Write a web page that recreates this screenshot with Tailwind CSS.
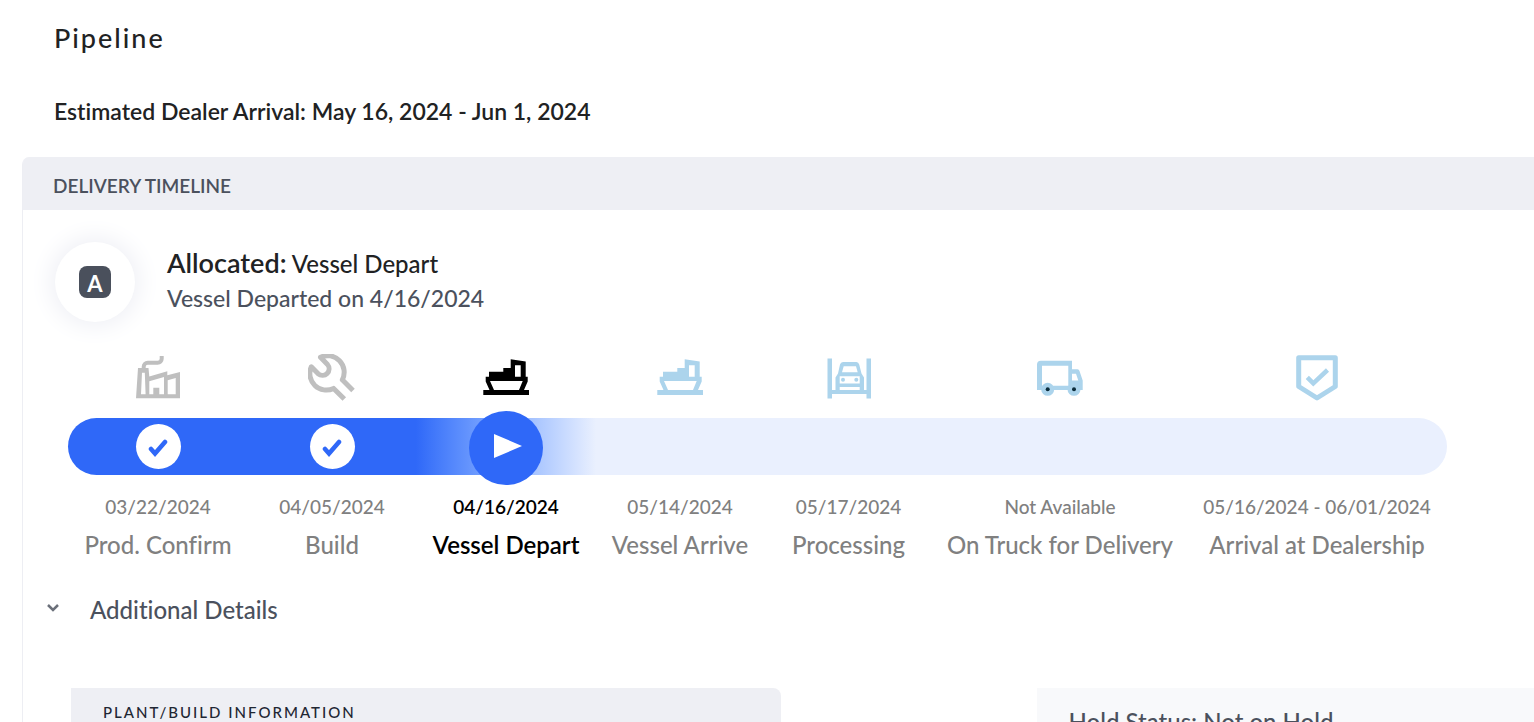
<!DOCTYPE html>
<html lang="en">
<head>
  <meta charset="UTF-8" />
  <meta name="viewport" content="width=device-width, initial-scale=1.0" />
  <title>Pipeline</title>
  <script src="https://cdn.jsdelivr.net/npm/@tailwindcss/browser@4"></script>
</head>

<body class="h-screen overflow-hidden bg-white font-['Lato',sans-serif] font-medium text-[#212223] [font-variant-ligatures:none]">

  <!-- Title + Estimate -->
  <header class="pl-[54px] pt-5">
    <h1 class="text-[27px] leading-9 tracking-[2px]">Pipeline</h1>
    <p class="mt-[37px] text-[23px] leading-9 font-semibold">Estimated Dealer Arrival: May 16, 2024 - Jun 1, 2024</p>
  </header>

  <!-- Delivery Timeline -->
  <section class="mt-7 ml-[22px] rounded-tl-lg border-l border-[#edeef3]">
    <h2 class="rounded-tl-md bg-[#eeeff4] pl-[30px] pt-1 text-[19px] leading-[49px] font-semibold text-[#4b515d]">DELIVERY TIMELINE</h2>

    <!-- Current status -->
    <div class="flex items-center gap-8 pl-8 pt-8">
      <div class="flex size-20 items-center justify-center rounded-full bg-white shadow-[0_0_24px_4px_#eeeff5]">
        <span class="flex size-8 items-center justify-center rounded-lg bg-[#4a505c] pt-1 text-[22px] leading-7 font-bold text-white">A</span>
      </div>
      <div class="pb-1.5">
        <p class="text-[24px] leading-9"><span class="text-[27px] font-semibold">Allocated:</span> Vessel Depart</p>
        <p class="text-[23px] leading-8 text-[#4b515d]">Vessel Departed on 4/16/2024</p>
      </div>
    </div>

    <!-- Steps -->
    <ol class="mt-8 mr-[87px] ml-[45px] grid grid-cols-[180fr_168fr_180fr_168fr_169fr_254fr_260fr] text-center whitespace-nowrap text-[#808080]">
      <li class="flex min-w-0 flex-col items-center">
        <svg class="size-12 text-[#bfbfbf]" viewBox="0 0 48 48" fill="currentColor">
          <path d="M9.7 15v-2.300a4 4 0 0 1 4-4h10a4 4 0 0 0 4-4V2" fill="none" stroke="currentColor" stroke-width="4" />
          <path fill-rule="evenodd" d="M2 44.300 4 14h10.500l.8 8.500 18-5.200v4L46 18v26.300zM8 18.700 7 40.300h4.600L10.800 18.700zM15.300 27.300V40.300h4v-6.600h6v6.600H30V23zM33.700 26.200V40.300h8V24z" />
        </svg>
        <div class="mt-4 flex h-[57px] w-full items-center justify-center rounded-l-full bg-[#2f68f8]">
          <span class="flex size-[45px] items-center justify-center rounded-full bg-white">
            <svg class="size-5" viewBox="0 0 20 20" fill="none" stroke="#2f68f8" stroke-width="4.500" stroke-linecap="round" stroke-linejoin="miter"><path d="m3 12 4 4.500L17 5" /></svg>
          </span>
        </div>
        <time class="mt-[18px] text-[19px] leading-7">03/22/2024</time>
        <span class="mt-2 text-[24px] leading-8">Prod. Confirm</span>
      </li>
      <li class="flex min-w-0 flex-col items-center">
        <svg class="size-12 text-[#bfbfbf]" viewBox="0 0 48 48" fill="none" stroke="currentColor" stroke-width="5" stroke-linejoin="round">
          <path d="M45 36.500 34.300 25.800A16.500 16.500 0 0 0 12.500 3.300l7 7.200a6.600 6.600 0 0 1-9.300 9.300L3.300 12.800A16.500 16.500 0 0 0 25.600 34.400L36.300 45.100" />
        </svg>
        <div class="mt-4 flex h-[57px] w-full items-center justify-center bg-[#2f68f8]">
          <span class="flex size-[45px] items-center justify-center rounded-full bg-white">
            <svg class="size-5" viewBox="0 0 20 20" fill="none" stroke="#2f68f8" stroke-width="4.500" stroke-linecap="round" stroke-linejoin="miter"><path d="m3 12 4 4.500L17 5" /></svg>
          </span>
        </div>
        <time class="mt-[18px] text-[19px] leading-7">04/05/2024</time>
        <span class="mt-2 text-[24px] leading-8">Build</span>
      </li>
      <li class="flex min-w-0 flex-col items-center font-semibold text-black" aria-current="step">
        <svg class="size-12 text-black" viewBox="0 0 48 48" fill="currentColor">
          <path fill-rule="evenodd" d="M1.300 36H7.500L3.700 27.500V22.700H7v-5H21.300V14h7.400V5.300l15 2.200V22.700h2v4.800L42 36h5v5H1.300zM8 27l4 9H37l3.700-9zM33 11.300V22.700h5.700V11.300z" />
        </svg>
        <div class="mt-4 flex h-[57px] w-full items-center justify-center bg-linear-to-r from-[#2f68f8] to-[#eaf0fe]">
          <span class="mt-0.5 flex size-[74px] shrink-0 items-center justify-center rounded-full bg-[#2f68f8]">
            <svg class="mb-1 ml-1 h-6 w-7" viewBox="0 0 28 24" fill="#fff"><path d="M0 0 28 12 0 24z" /></svg>
          </span>
        </div>
        <time class="mt-[18px] text-[19px] leading-7">04/16/2024</time>
        <span class="mt-2 text-[24px] leading-8">Vessel Depart</span>
      </li>
      <li class="flex min-w-0 flex-col items-center">
        <svg class="size-12 text-[#acd4ec]" viewBox="0 0 48 48" fill="currentColor">
          <path fill-rule="evenodd" d="M1.300 36H7.500L3.700 27.500V22.700H7v-5H21.300V14h7.400V5.300l15 2.200V22.700h2v4.800L42 36h5v5H1.300zM8 27l4 9H37l3.700-9zM33 11.300V22.700h5.700V11.300z" />
        </svg>
        <div class="mt-4 h-[57px] w-full bg-[#eaf0fe]"></div>
        <time class="mt-[18px] text-[19px] leading-7">05/14/2024</time>
        <span class="mt-2 text-[24px] leading-8">Vessel Arrive</span>
      </li>
      <li class="flex min-w-0 flex-col items-center">
        <svg class="size-12 text-[#acd4ec]" viewBox="0 0 48 48" fill="currentColor">
          <path d="M2.500 4.500H7V36H41.500V4.500H46V44.500H41.500V40H7V44.500H2.500z" />
          <path fill-rule="evenodd" d="M10.500 36V23.500l2.500-4L15 10.500Q15.700 8 18 8H31.500Q33.500 8 34.200 10.500L36.500 19.500l2.500 4V36zM18.700 12.300 17 18.300H32.700L31 12.300zM14.700 22.300v7.200h20v-7.200zM14.700 33v3h20v-3z" />
          <circle cx="18" cy="25.800" r="2" />
          <circle cx="31.300" cy="25.800" r="2" />
        </svg>
        <div class="mt-4 h-[57px] w-full bg-[#eaf0fe]"></div>
        <time class="mt-[18px] text-[19px] leading-7">05/17/2024</time>
        <span class="mt-2 text-[24px] leading-8">Processing</span>
      </li>
      <li class="flex min-w-0 flex-col items-center">
        <svg class="size-12 text-[#acd4ec]" viewBox="0 0 48 48" fill="currentColor">
          <path fill-rule="evenodd" d="M1 36V10.500Q1 6.700 4.800 6.700H36v8.600h5.500Q43 15.300 43.500 17L46.700 26.500V36zM6 11.700V31.700H32.300V11.700zM36 19.700V26.500h6.300L40 19.700z" />
          <circle cx="11.700" cy="35.300" r="6.500" />
          <circle cx="38" cy="35.300" r="6.500" />
          <circle cx="11.700" cy="35.300" r="2" fill="#0b2c3b" />
          <circle cx="38" cy="35.300" r="2" fill="#0b2c3b" />
        </svg>
        <div class="mt-4 h-[57px] w-full bg-[#eaf0fe]"></div>
        <span class="mt-[18px] text-[19px] leading-7">Not Available</span>
        <span class="mt-2 text-[24px] leading-8">On Truck for Delivery</span>
      </li>
      <li class="flex min-w-0 flex-col items-center">
        <svg class="size-12 text-[#acd4ec]" viewBox="0 0 48 48" fill="none" stroke="currentColor" stroke-width="5" stroke-linejoin="round">
          <path d="M5.700 3.700H42.300V32.500L24 44 5.700 32.500z" />
          <path d="M14.300 23.300l6 6L34.500 16" stroke-linejoin="miter" stroke-width="4.500" />
        </svg>
        <div class="mt-4 h-[57px] w-full rounded-r-full bg-[#eaf0fe]"></div>
        <span class="mt-[18px] text-[19px] leading-7">05/16/2024 - 06/01/2024</span>
        <span class="mt-2 text-[24px] leading-8">Arrival at Dealership</span>
      </li>
    </ol>

    <!-- Additional Details -->
    <button type="button" aria-expanded="true" class="mt-[33px] ml-6 flex items-center gap-[31px] text-[24px] leading-8 text-[#4b515d]">
      <svg class="mb-1 h-3 w-3" viewBox="0 0 12 12" fill="none" stroke="#6b707a" stroke-width="2.500"><path d="m1 3 5 5 5-5" /></svg>
      Additional Details
    </button>

    <div class="mt-[62px] ml-12 flex justify-between">
      <div class="h-24 w-[48.5%] rounded-tr-lg bg-[#eeeff4] pt-3 pl-8">
        <h3 class="text-[15px] leading-6 tracking-[2px] text-[#1f2733]">PLANT/BUILD INFORMATION</h3>
      </div>
      <div class="h-24 w-[34%] bg-[#f8f9fb] pt-4 pl-8">
        <p class="text-[24px] leading-9 text-[#4b515d]">Hold Status: Not on Hold</p>
      </div>
    </div>
  </section>

</body>
</html>
